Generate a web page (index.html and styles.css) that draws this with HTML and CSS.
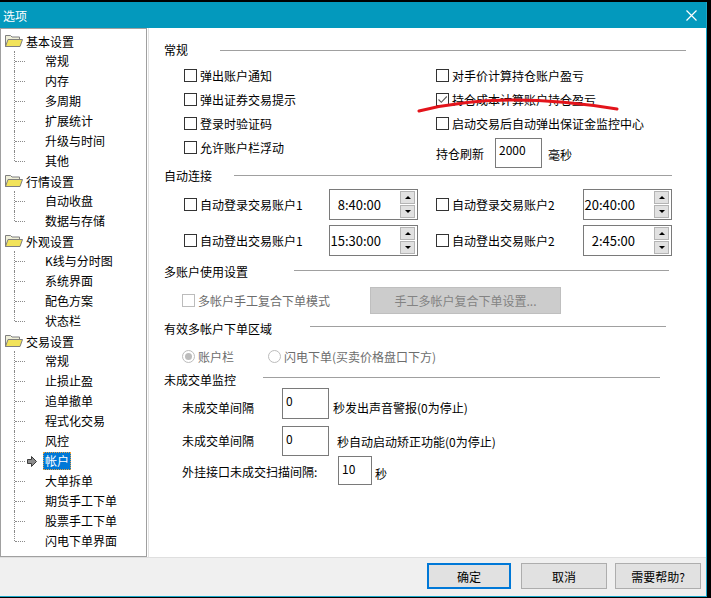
FILE: index.html
```html
<!DOCTYPE html>
<html lang="zh-CN">
<head>
    <meta charset="UTF-8">
    <title>选项</title>
    <link rel="stylesheet" href="styles.css">
</head>
<body>
    <div class="dialog">
        <div class="titlebar">
            <span class="title">选项</span>
            <svg class="close" width="11" height="11" viewBox="0 0 11 11"><path d="M0.5 0.5L10.5 10.5M10.5 0.5L0.5 10.5" stroke="#fff" stroke-width="1.2"/></svg>
        </div>

        <div class="main">
            <!-- left tree -->
            <ul class="tree">
                <li class="group">
                    <div class="node"><svg class="folder" width="18" height="12" viewBox="0 0 18 12"><path d="M0.5 0.5h5l1.5 1.5h7.5v9.5h-14z" fill="#efefd8" stroke="#7f7f7f"/><path d="M3 4.5h14.5l-2.5 7h-14.5z" fill="#f2e35a" stroke="#7f7f7f"/></svg><span>基本设置</span></div>
                    <ul class="children">
                        <li>常规</li>
                        <li>内存</li>
                        <li>多周期</li>
                        <li>扩展统计</li>
                        <li>升级与时间</li>
                        <li>其他</li>
                    </ul>
                </li>
                <li class="group">
                    <div class="node"><svg class="folder" width="18" height="12" viewBox="0 0 18 12"><path d="M0.5 0.5h5l1.5 1.5h7.5v9.5h-14z" fill="#efefd8" stroke="#7f7f7f"/><path d="M3 4.5h14.5l-2.5 7h-14.5z" fill="#f2e35a" stroke="#7f7f7f"/></svg><span>行情设置</span></div>
                    <ul class="children">
                        <li>自动收盘</li>
                        <li>数据与存储</li>
                    </ul>
                </li>
                <li class="group">
                    <div class="node"><svg class="folder" width="18" height="12" viewBox="0 0 18 12"><path d="M0.5 0.5h5l1.5 1.5h7.5v9.5h-14z" fill="#efefd8" stroke="#7f7f7f"/><path d="M3 4.5h14.5l-2.5 7h-14.5z" fill="#f2e35a" stroke="#7f7f7f"/></svg><span>外观设置</span></div>
                    <ul class="children">
                        <li>K线与分时图</li>
                        <li>系统界面</li>
                        <li>配色方案</li>
                        <li>状态栏</li>
                    </ul>
                </li>
                <li class="group">
                    <div class="node"><svg class="folder" width="18" height="12" viewBox="0 0 18 12"><path d="M0.5 0.5h5l1.5 1.5h7.5v9.5h-14z" fill="#efefd8" stroke="#7f7f7f"/><path d="M3 4.5h14.5l-2.5 7h-14.5z" fill="#f2e35a" stroke="#7f7f7f"/></svg><span>交易设置</span></div>
                    <ul class="children">
                        <li>常规</li>
                        <li>止损止盈</li>
                        <li>追单撤单</li>
                        <li>程式化交易</li>
                        <li>风控</li>
                        <li class="selected">
                            <svg class="arrow" width="10" height="11" viewBox="0 0 10 11"><path d="M0.5 3.5h4v-3l5 5-5 5v-3h-4z" fill="#8c8c8c" stroke="#3c3c3c"/></svg>
                            <span class="sel-label">帐户</span>
                        </li>
                        <li>大单拆单</li>
                        <li>期货手工下单</li>
                        <li>股票手工下单</li>
                        <li>闪电下单界面</li>
                    </ul>
                </li>
            </ul>

            <!-- settings panel -->
            <div class="panel">
                <div class="head"><span>常规</span><span class="rule rule-general"></span></div>
                <div class="cols">
                    <div class="col col-left">
                        <div class="chk"><span class="box"></span>弹出账户通知</div>
                        <div class="chk"><span class="box"></span>弹出证券交易提示</div>
                        <div class="chk"><span class="box"></span>登录时验证码</div>
                        <div class="chk"><span class="box"></span>允许账户栏浮动</div>
                    </div>
                    <div class="col">
                        <div class="chk"><span class="box"></span>对手价计算持仓账户盈亏</div>
                        <div class="chk"><span class="box"><svg width="11" height="11" viewBox="0 0 11 11"><path d="M1.5 5.5l2.8 2.8 5.5-5.8" fill="none" stroke="#5a5a5a" stroke-width="1.1"/></svg></span>持仓成本计算账户持仓盈亏</div>
                        <div class="chk"><span class="box"></span>启动交易后自动弹出保证金监控中心</div>
                        <div class="refresh">
                            <span>持仓刷新</span>
                            <span class="field field-refresh">2000</span>
                            <span class="unit">毫秒</span>
                        </div>
                    </div>
                </div>

                <div class="head"><span>自动连接</span><span class="rule rule-auto"></span></div>
                <div class="auto">
                    <div class="auto-row">
                        <div class="chk chk-auto"><span class="box"></span>自动登录交易账户1</div>
                        <div class="spin"><span class="spin-text">8:40:00</span><span class="spin-btns"><span class="sbtn"><i class="up"></i></span><span class="sbtn"><i class="down"></i></span></span></div>
                        <div class="chk chk-auto chk-auto2"><span class="box"></span>自动登录交易账户2</div>
                        <div class="spin"><span class="spin-text">20:40:00</span><span class="spin-btns"><span class="sbtn"><i class="up"></i></span><span class="sbtn"><i class="down"></i></span></span></div>
                    </div>
                    <div class="auto-row">
                        <div class="chk chk-auto"><span class="box"></span>自动登出交易账户1</div>
                        <div class="spin"><span class="spin-text">15:30:00</span><span class="spin-btns"><span class="sbtn"><i class="up"></i></span><span class="sbtn"><i class="down"></i></span></span></div>
                        <div class="chk chk-auto chk-auto2"><span class="box"></span>自动登出交易账户2</div>
                        <div class="spin"><span class="spin-text">2:45:00</span><span class="spin-btns"><span class="sbtn"><i class="up"></i></span><span class="sbtn"><i class="down"></i></span></span></div>
                    </div>
                </div>

                <div class="head head-multi"><span>多账户使用设置</span><span class="rule rule-multi"></span></div>
                <div class="multi-row">
                    <div class="chk chk-multi disabled"><span class="box"></span>多帐户手工复合下单模式</div>
                    <div class="btn-disabled">手工多帐户复合下单设置...</div>
                </div>

                <div class="head head-area"><span>有效多帐户下单区域</span><span class="rule rule-area"></span></div>
                <div class="radio-row">
                    <div class="radio radio-first"><span class="dot on"></span>账户栏</div>
                    <div class="radio"><span class="dot"></span>闪电下单(买卖价格盘口下方)</div>
                </div>

                <div class="head head-monitor"><span>未成交单监控</span><span class="rule rule-monitor"></span></div>
                <div class="mon-row mon-first">
                    <span class="mon-label">未成交单间隔</span>
                    <span class="field field-mon">0</span>
                    <span class="mon-text">秒发出声音警报(0为停止)</span>
                </div>
                <div class="mon-row mon-second">
                    <span class="mon-label">未成交单间隔</span>
                    <span class="field field-mon">0</span>
                    <span class="mon-text mon-text-wide">秒自动启动矫正功能(0为停止)</span>
                </div>
                <div class="mon-row">
                    <span class="mon-label mon-label-long">外挂接口未成交扫描间隔:</span>
                    <span class="field field-small">10</span>
                    <span class="mon-text mon-text-near">秒</span>
                </div>
            </div>
        </div>

        <div class="footer">
            <button class="btn btn-default">确定</button>
            <button class="btn btn-cancel">取消</button>
            <button class="btn">需要帮助?</button>
        </div>
    </div>

    <!-- red pen mark drawn over the screenshot -->
    <svg class="scribble" width="711" height="598" viewBox="0 0 711 598"><path d="M419 111 Q 500 90 617 109" fill="none" stroke="#e3141b" stroke-width="3" stroke-linecap="round"/></svg>
</body>
</html>
```

FILE: styles.css
```css
body {
    margin: 0;
    background-color: #000;
    font-family: "Noto Sans CJK SC", "Microsoft YaHei", sans-serif;
    font-size: 12px;
    color: #000;
    position: relative;
    width: 711px;
    height: 598px;
    overflow: hidden;
}

.dialog {
    margin-top: 2px;
    width: 707px;
    box-sizing: border-box;
    border-right: 1px solid #1aa7c8;
    border-bottom: 1px solid #1aa7c8;
    background-color: #fff;
}

.titlebar {
    height: 26px;
    background-color: #0399bd;
    display: flex;
    align-items: center;
    justify-content: space-between;
    padding: 0 9px 0 3px;
    color: #fff;
}

.title {
    font-size: 12px;
}

.main {
    display: flex;
    height: 529px;
}

/* tree */
.tree {
    list-style: none;
    margin: 0;
    padding: 2px 0 0 0;
    width: 147px;
    box-sizing: border-box;
    border: 1px solid #a0a0a0;
    background-color: #fff;
}

.group ul {
    list-style: none;
    margin: 0;
    padding: 0;
}

.node {
    height: 20px;
    display: flex;
    align-items: center;
    white-space: nowrap;
}

.folder {
    margin-left: 4px;
    margin-right: 3px;
}

.children li {
    height: 20px;
    line-height: 20px;
    padding-left: 44px;
    position: relative;
    white-space: nowrap;
}

.children li::before {
    content: "";
    position: absolute;
    left: 13px;
    top: 0;
    height: 100%;
    border-left: 1px dotted #8a8a8a;
}

.children li:last-child::before {
    height: 50%;
}

.children li::after {
    content: "";
    position: absolute;
    left: 14px;
    top: 10px;
    width: 10px;
    border-top: 1px dotted #8a8a8a;
}

.children li.selected {
    display: flex;
    align-items: center;
}

.arrow {
    position: absolute;
    left: 26px;
    top: 5px;
}

.sel-label {
    margin-left: -2px;
    height: 16px;
    line-height: 16px;
    padding: 0 1px;
    background-color: #0078d7;
    color: #fff;
    border: 1px dotted #e8a040;
}

/* panel */
.panel {
    flex: 1;
    margin-left: 1px;
    border-left: 1px solid #e3e3e3;
    padding: 14px 0 0 15px;
}

.head {
    display: flex;
    align-items: center;
    height: 16px;
    line-height: 16px;
}

.rule {
    flex: 1;
    border-top: 1px solid #a0a0a0;
}

.rule-general { margin: 0 20px 0 32px; }
.rule-auto { margin: -1px 34px 0 22px; }
.rule-multi { margin: -3px 37px 0 46px; }
.rule-area { margin: -5px 40px 0 38px; }
.rule-monitor { margin: -5px 46px 0 27px; }

.head-multi { margin-top: 8px; }
.head-area { margin-top: 7px; }
.head-monitor { margin-top: 4px; }

.cols {
    display: flex;
    margin-top: 5px;
    padding-left: 20px;
}

.col-left {
    width: 252px;
}

.chk {
    display: flex;
    align-items: center;
    height: 24px;
    white-space: nowrap;
}

.box {
    width: 13px;
    height: 13px;
    box-sizing: border-box;
    border: 1px solid #333;
    background-color: #fff;
    margin-right: 3px;
    display: flex;
    align-items: center;
    justify-content: center;
}

.refresh {
    display: flex;
    align-items: center;
    margin-top: 3px;
    height: 30px;
}

.field {
    box-sizing: border-box;
    border: 1px solid #7a7a7a;
    background-color: #fff;
    padding: 3px 0 0 3px;
    line-height: 16px;
    align-self: flex-start;
}

.field-refresh {
    width: 47px;
    height: 30px;
    margin: 0 6px 0 11px;
}

.unit {
    margin-top: 2px;
}

.auto {
    margin-top: 5px;
    padding-left: 20px;
}

.auto-row {
    display: flex;
    height: 31px;
    margin-bottom: 5px;
}

.auto-row .chk {
    height: 31px;
}

.chk-auto {
    width: 145px;
}

.chk-auto2 {
    margin-left: 18px;
    width: 147px;
}

.spin {
    width: 89px;
    height: 31px;
    box-sizing: border-box;
    border: 1px solid #7a7a7a;
    display: flex;
    align-items: center;
    font-size: 13px;
}

.spin-text {
    width: 51px;
    text-align: right;
}

.spin-btns {
    margin-left: auto;
    margin-right: 2px;
    display: flex;
    flex-direction: column;
    gap: 1px;
}

.sbtn {
    width: 15px;
    height: 13px;
    box-sizing: border-box;
    background-color: #e1e1e1;
    border: 1px solid #b4b4b4;
    display: flex;
    align-items: center;
    justify-content: center;
}

.sbtn i {
    width: 0;
    height: 0;
    border-left: 3px solid transparent;
    border-right: 3px solid transparent;
}

.sbtn .up { border-bottom: 3px solid #000; }
.sbtn .down { border-top: 3px solid #000; }

.multi-row {
    display: flex;
    align-items: center;
    margin-top: 7px;
    padding-left: 18px;
    height: 27px;
}

.chk-multi {
    width: 188px;
}

.disabled {
    color: #6d6d6d;
}

.disabled .box {
    border-color: #bcbcbc;
}

.btn-disabled {
    width: 191px;
    height: 27px;
    box-sizing: border-box;
    background-color: #cccccc;
    border: 1px solid #bfbfbf;
    color: #838383;
    display: flex;
    align-items: center;
    justify-content: center;
}

.radio-row {
    display: flex;
    align-items: center;
    margin-top: 7px;
    height: 24px;
    padding-left: 18px;
    color: #6d6d6d;
}

.radio {
    display: flex;
    align-items: center;
}

.radio-first {
    width: 86px;
}

.dot {
    width: 13px;
    height: 13px;
    box-sizing: border-box;
    border: 1px solid #bcbcbc;
    border-radius: 50%;
    margin-right: 3px;
    display: flex;
    align-items: center;
    justify-content: center;
}

.dot.on::after {
    content: "";
    width: 7px;
    height: 7px;
    border-radius: 50%;
    background-color: #bcbcbc;
}

.mon-row {
    display: flex;
    align-items: center;
    padding-left: 18px;
    height: 31px;
}

.mon-second {
    margin-top: 7px;
    height: 30px;
}

.mon-label {
    width: 100px;
    line-height: 16px;
}

.mon-label-long {
    width: 156px;
}

.mon-first .mon-label,
.mon-first .mon-text {
    margin-top: 8px;
}

.field-mon {
    width: 47px;
    height: 100%;
    padding-top: 4px;
}

.field-small {
    width: 34px;
    height: 29px;
    padding-top: 4px;
}

.mon-text {
    margin-left: 4px;
}

.mon-text-wide {
    margin-left: 8px;
}

.mon-text-near {
    margin-left: 3px;
    margin-top: 3px;
}

.footer {
    height: 39px;
    box-sizing: border-box;
    border-top: 1px solid #dfdfdf;
    background-color: #f0f0f0;
    display: flex;
    justify-content: flex-end;
    align-items: flex-start;
    padding: 5px 5px 0 0;
}

.btn {
    width: 86px;
    height: 26px;
    margin-left: 8px;
    background-color: #e1e1e1;
    border: 1px solid #adadad;
    font-family: inherit;
    font-size: 12px;
    color: #000;
    padding: 0;
}

.btn-default {
    width: 84px;
    border: 2px solid #0078d7;
    margin-left: 0;
}

.btn-cancel {
    margin-left: 10px;
}

.scribble {
    position: absolute;
    left: 0;
    top: 0;
    pointer-events: none;
}
```
